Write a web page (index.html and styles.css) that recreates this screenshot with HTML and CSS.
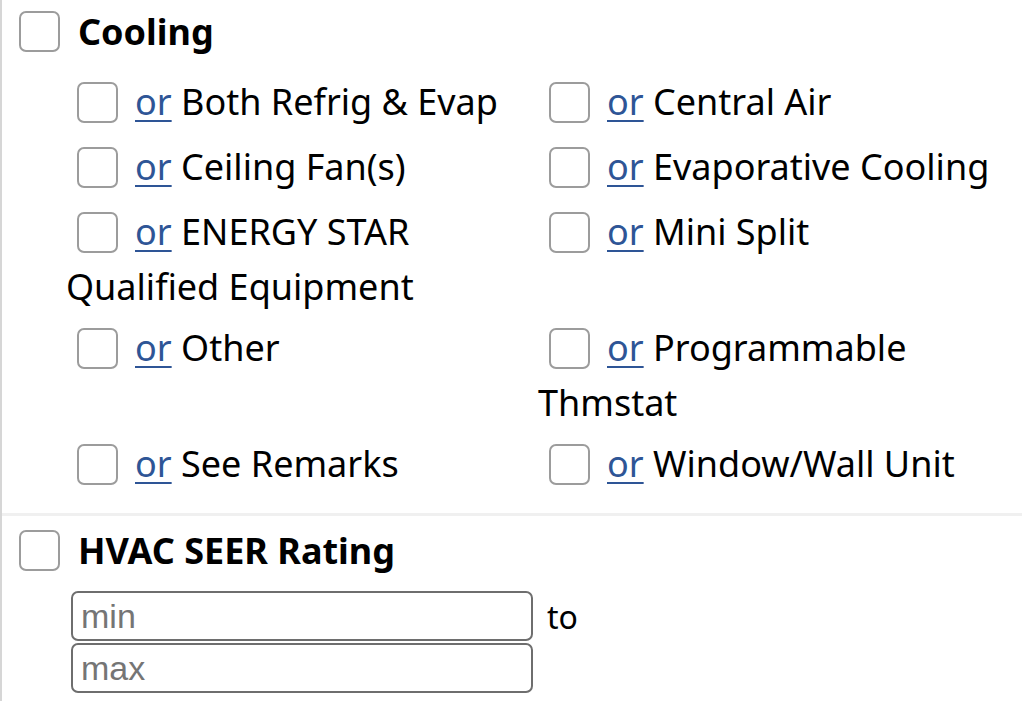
FILE: index.html
```html
<html>
<head>
	<title>Search - Cooling</title>
	<link rel="stylesheet" href="styles.css">
</head>
<body>
<div class="panel">

	<div class="field">
		<label class="head"><input type="checkbox" class="box"> Cooling</label>
		<div class="opts">
			<div class="opt"><input type="checkbox" class="box"><a href="#">or</a> Both Refrig &amp; Evap</div>
			<div class="opt"><input type="checkbox" class="box"><a href="#">or</a> Central Air</div>
			<div class="opt"><input type="checkbox" class="box"><a href="#">or</a> Ceiling Fan(s)</div>
			<div class="opt"><input type="checkbox" class="box"><a href="#">or</a> Evaporative Cooling</div>
			<div class="opt"><input type="checkbox" class="box"><a href="#">or</a> ENERGY STAR Qualified Equipment</div>
			<div class="opt"><input type="checkbox" class="box"><a href="#">or</a> Mini Split</div>
			<div class="opt"><input type="checkbox" class="box"><a href="#">or</a> Other</div>
			<div class="opt"><input type="checkbox" class="box"><a href="#">or</a> Programmable Thmstat</div>
			<div class="opt"><input type="checkbox" class="box"><a href="#">or</a> See Remarks</div>
			<div class="opt"><input type="checkbox" class="box"><a href="#">or</a> Window/Wall Unit</div>
		</div>
	</div>

	<div class="field">
		<label class="head"><input type="checkbox" class="box"> HVAC SEER Rating</label>
		<div class="range">
			<div class="row"><input type="text" class="num" placeholder="min"> <span class="to">to</span></div>
			<div class="row"><input type="text" class="num" placeholder="max"></div>
		</div>
	</div>

</div>
</body>
</html>
```

FILE: styles.css
```css
body {margin:0; background:#fff; font: 36px "Noto Sans", "Open Sans", sans-serif; color:#000;}
div.panel {border-left: 2px solid #d6d6d6; min-height: 701px;}
div.field {padding: 11px 0 0 0; border-bottom: 3px solid #f0f0f0;}
div.field:last-child {border-bottom: none; padding-top: 14px;}

input.box {appearance:none; -webkit-appearance:none; width:41px; height:41px; margin:0; border:2px solid #9c9c9c; border-radius:7px; background:#fff; box-sizing:border-box; vertical-align:-10px;}

label.head {display:flex; align-items:center; gap:18px; padding-left:17px; font-weight:bold; font-size:36px; line-height:41px;}

div.opts {display:grid; grid-template-columns: 472px 472px; padding: 24px 0 10px 64px;}
div.opt {line-height:51px; margin-bottom:10px;}
div.opt input.box {margin: 0 17px 8px 11px; vertical-align:-16px;}
div.opt a {color:#2e5596; text-decoration-thickness:2px; text-underline-offset:5px;}

div.range {padding: 20px 0 0 69px;}
div.row {display:flex; align-items:center; margin-bottom:2px;}
input.num {width:462px; height:50px; box-sizing:border-box; border:2px solid #6e6e6e; border-radius:7px; padding:0 8px; font: 34px "Liberation Sans", Arial, sans-serif; margin:0;}
input.num::placeholder {color:#757575;}
span.to {margin-left:14px; font-size:32px;}
```
